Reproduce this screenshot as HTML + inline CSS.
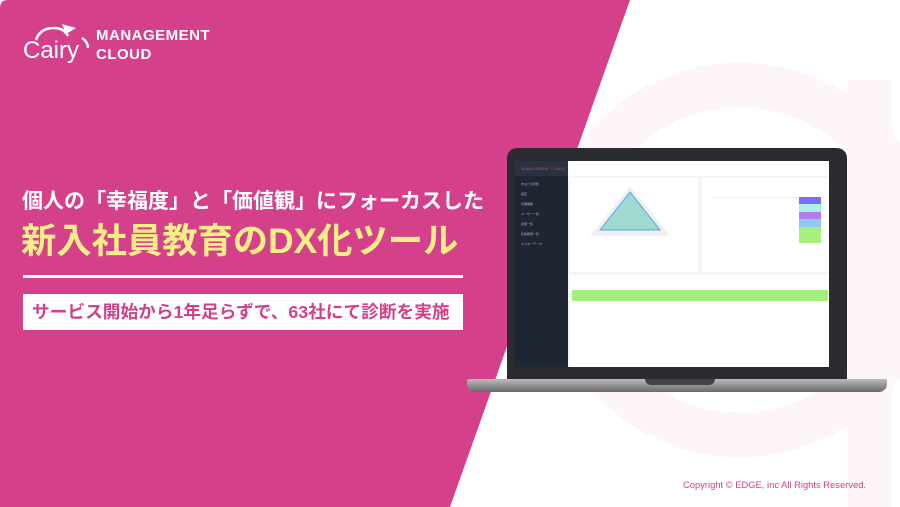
<!DOCTYPE html>
<html><head><meta charset="utf-8"><style>
*{margin:0;padding:0;box-sizing:border-box}
body{width:900px;height:507px;overflow:hidden;background:#fff;position:relative;font-family:"Liberation Sans","Noto Sans CJK JP",sans-serif}
.abs{position:absolute}
.t1{left:22px;top:185px;color:#fff;font-size:21px;font-weight:bold;white-space:nowrap}
.t2{left:21px;top:221px;color:#f8ee88;font-size:35.3px;font-weight:bold;white-space:nowrap;line-height:42px}
.rule{left:23px;top:275px;width:440px;height:3px;background:#fff}
.box{left:23px;top:294px;width:440px;height:36px;background:#fff;color:#d0418a;font-size:17.7px;font-weight:bold;line-height:36px;padding-left:9px;white-space:nowrap}
.side div{height:10px;font-size:3px;color:#aab;padding-left:6px;display:flex;align-items:center}
</style></head><body>
<svg class="abs" style="left:0;top:0" width="900" height="507">
<g fill="none" stroke="#fdf5f8" stroke-width="45">
<circle cx="740" cy="260" r="175"/>
<path d="M870 80 L870 507"/>
</g>
<path d="M8 0 L630 0 L450 507 L0 507 L0 8 Q0 0 8 0Z" fill="#d4418a"/>
</svg>
<svg class="abs" style="left:22px;top:22px" width="72" height="42">
<path d="M14 18 Q18 6 32 6 Q42 6 46 14" fill="none" stroke="#fff" stroke-width="2.5"/>
<path d="M40 2 L54 6 L44 12 Z" fill="#fff"/>
<path d="M60 16 Q66 20 66 26" fill="none" stroke="#fff" stroke-width="2.5"/>
<text x="1" y="36" fill="#fff" font-family="Liberation Sans" font-size="24">Cairy</text>
</svg>
<div class="abs" style="left:96px;top:26px;color:#fff;font-size:15px;font-weight:bold;line-height:19px;letter-spacing:0.5px">MANAGEMENT<br>CLOUD</div>

<div class="abs t1">個人の「幸福度」と「価値観」にフォーカスした</div>
<div class="abs t2">新入社員教育のDX化ツール</div>
<div class="abs rule"></div>
<div class="abs box">サービス開始から1年足らずで、63社にて診断を実施</div>

<div class="abs" style="left:507px;top:148px;width:340px;height:233px;background:#2a2b2e;border-radius:10px 10px 0 0"></div>
<div class="abs" style="left:467px;top:379px;width:420px;height:13px;background:linear-gradient(#bbb,#6a6a6a);border-radius:2px 2px 8px 8px"></div>
<div class="abs" style="left:645px;top:379px;width:70px;height:6px;background:#444;border-radius:0 0 6px 6px"></div>
<div class="abs" style="left:515px;top:161px;width:314px;height:206px;background:#f4f5f7;overflow:hidden">
  <div class="abs side" style="left:0;top:0;width:53px;height:206px;background:#1f2633">
    <div style="height:15px;background:#2a3140;color:#d0418a;font-size:4px">MANAGEMENT CLOUD</div>
    <div style="margin-top:3px">あなたの診断</div><div>設定</div><div>管理機能</div><div>ユーザー一覧</div><div>診断一覧</div><div>診断履歴一覧</div><div>マスターデータ</div>
  </div>
  <div class="abs" style="left:53px;top:0;width:261px;height:15px;background:#fff"></div>
  <div class="abs" style="left:55px;top:17px;width:128px;height:94px;background:#fff"></div>
  <div class="abs" style="left:187px;top:17px;width:127px;height:94px;background:#fff"></div>
  <svg class="abs" style="left:55px;top:17px" width="128" height="94">
   <polygon points="60,8 100,58 20,58" fill="#eef0f2"/>
   <polygon points="60,14 90,52 30,52" fill="#9fd9cf" stroke="#5aa0f0" stroke-width="1"/>
  </svg>
  <div class="abs" style="left:197px;top:36px;width:108px;height:46px;background:#fff;border-top:1px solid #eee"></div>
  <div class="abs" style="left:284px;top:36px;width:22px;height:7px;background:#7a6ff0"></div>
  <div class="abs" style="left:284px;top:43px;width:22px;height:8px;background:#aef0e8"></div>
  <div class="abs" style="left:284px;top:51px;width:22px;height:7px;background:#b57cf0"></div>
  <div class="abs" style="left:284px;top:58px;width:22px;height:8px;background:#92c8f5"></div>
  <div class="abs" style="left:284px;top:66px;width:22px;height:16px;background:#a7f07a"></div>
  <div class="abs" style="left:55px;top:114px;width:259px;height:92px;background:#fff"></div>
  <div class="abs" style="left:57px;top:129px;width:256px;height:11px;background:#a2f07c"></div>
</div>
<div class="abs" style="left:683px;top:479px;color:#d0418a;font-size:9.4px;white-space:nowrap">Copyright © EDGE, inc All Rights Reserved.</div>
</body></html>
